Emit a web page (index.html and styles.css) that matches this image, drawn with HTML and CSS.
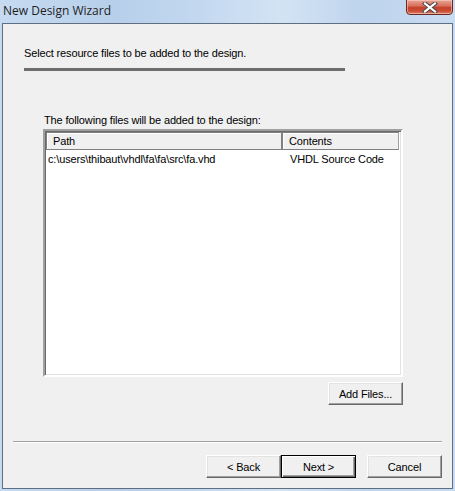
FILE: index.html
```html
<!DOCTYPE html>
<html>
<head>
<meta charset="utf-8">
<link rel="stylesheet" href="styles.css">
</head>
<body>
<div class="window">
  <div class="titlebar">
    <span class="title">New Design Wizard</span>
    <div class="close">
      <svg width="16" height="11" viewBox="0 0 16 11">
        <path d="M3 1.5 L13 9.5 M13 1.5 L3 9.5" stroke="#4a4a4a" stroke-width="4.2" stroke-linecap="square" fill="none"/>
        <path d="M3 1.5 L13 9.5 M13 1.5 L3 9.5" stroke="#ffffff" stroke-width="2.2" stroke-linecap="square" fill="none"/>
      </svg>
    </div>
  </div>
  <div class="client">
    <div class="header">
      <p class="heading">Select resource files to be added to the design.</p>
      <div class="rule"></div>
    </div>
    <div class="body">
      <p class="label">The following files will be added to the design:</p>
      <div class="listbox">
        <div class="lv-head">
          <div class="col col-path">Path</div>
          <div class="col col-contents">Contents</div>
        </div>
        <div class="lv-row">
          <div class="cell col-path">c:\users\thibaut\vhdl\fa\fa\src\fa.vhd</div>
          <div class="cell col-contents">VHDL Source Code</div>
        </div>
      </div>
      <div class="add-row">
        <button class="btn">Add Files...</button>
      </div>
    </div>
    <div class="separator"></div>
    <div class="footer">
      <button class="btn">&lt; Back</button>
      <button class="btn btn-default">Next &gt;</button>
      <button class="btn btn-cancel">Cancel</button>
    </div>
  </div>
</div>
</body>
</html>
```

FILE: styles.css
```css
* { box-sizing: border-box; }
html, body {
  margin: 0;
  padding: 0;
  width: 455px;
  height: 491px;
  overflow: hidden;
}
body {
  font-family: "Liberation Sans", Arial, sans-serif;
  font-size: 11px;
  letter-spacing: -0.15px;
  color: #000;
}
.window {
  width: 455px;
  height: 491px;
  display: flex;
  flex-direction: column;
  background: linear-gradient(to right, #c6dbf1 0%, #b7cfea 25%, #c4d9f0 45%, #d3e3f4 62%, #bed4ed 80%, #c8dcf1 100%);
  padding: 0 2px 2px 2px;
}
.titlebar {
  height: 23px;
  display: flex;
  align-items: flex-start;
  justify-content: space-between;
  position: relative;
}
.title {
  font-family: "Open Sans", "Noto Sans", sans-serif;
  font-size: 12px;
  letter-spacing: 0;
  color: #1e1e1e;
  padding: 3px 0 0 1px;
  line-height: 16px;
}
.close {
  width: 47px;
  height: 16px;
  margin-top: -1px;
  margin-right: 0;
  border: 1px solid #6a2a22;
  border-radius: 0 0 4px 4px;
  background: linear-gradient(to bottom, #e8a495 0%, #d9735f 40%, #c4402a 55%, #cc4e36 80%, #e0876f 100%);
  display: flex;
  align-items: center;
  justify-content: center;
  box-shadow: inset 0 0 0 1px rgba(255,220,210,0.5);
}
.close svg { display: block; }
.client {
  flex: 1;
  background: #f0f0f0;
  border: 1px solid #5f6f82;
  display: flex;
  flex-direction: column;
}
.header {
  padding: 23px 0 0 21px;
}
.heading {
  margin: 0;
  line-height: 13px;
  height: 13px;
}
.rule {
  margin-top: 8px;
  width: 321px;
  height: 3px;
  background: #6d6d6d;
}
.body {
  padding: 43px 0 0 40px;
}
.label {
  margin: 0 0 0 1px;
  line-height: 13px;
  height: 13px;
}
.listbox {
  margin-top: 2px;
  width: 360px;
  height: 248px;
  background: #fff;
  border-style: solid;
  border-width: 2px;
  border-color: #a0a0a0 #ffffff #ffffff #a0a0a0;
  box-shadow: inset 1px 1px 0 #696969, inset -1px -1px 0 #e3e3e3;
  padding: 1px 1px 0 1px;
}
.lv-head {
  display: flex;
  height: 18px;
  background: #f0f0f0;
  border: 1px solid #808080;
  border-right-color: #a0a0a0;
  margin-right: 1px;
}
.col {
  line-height: 16px;
  padding-left: 6px;
  box-shadow: inset 1px 1px 0 #ffffff;
}
.lv-head .col-path {
  width: 236px;
  border-right: 2px solid #808080;
}
.lv-head .col-contents {
  flex: 1;
}
.lv-row {
  display: flex;
  height: 16px;
  line-height: 16px;
  margin-top: 1px;
}
.lv-row .col-path {
  width: 238px;
  padding-left: 2px;
}
.lv-row .col-contents {
  flex: 1;
  padding-left: 6px;
}
.add-row {
  width: 360px;
  display: flex;
  justify-content: flex-end;
  margin-top: 5px;
}
.btn {
  font-family: "Liberation Sans", Arial, sans-serif;
  font-size: 11px;
  letter-spacing: -0.15px;
  width: 75px;
  height: 23px;
  padding: 0;
  margin: 0;
  background: #f0f0f0;
  color: #000;
  border-style: solid;
  border-width: 1px;
  border-color: #ffffff #696969 #696969 #ffffff;
  box-shadow: inset -1px -1px 0 #a0a0a0, inset 1px 1px 0 #e3e3e3;
  border-radius: 0;
}
.btn-default {
  border: 1px solid #000;
  box-shadow: inset 1px 1px 0 #ffffff, inset -1px -1px 0 #696969, inset -2px -2px 0 #a0a0a0;
}
.separator {
  margin: 36px 10px 0 10px;
  height: 2px;
  border-top: 1px solid #a0a0a0;
  border-bottom: 1px solid #ffffff;
}
.footer {
  display: flex;
  justify-content: flex-end;
  padding: 12px 10px 0 0;
}
.btn-cancel { margin-left: 11px; }
```
